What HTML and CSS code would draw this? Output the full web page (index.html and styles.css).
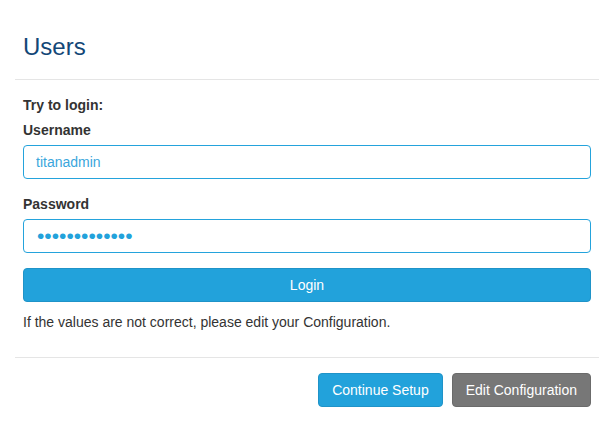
FILE: index.html
```html
<!DOCTYPE html>
<html>
<head>
<meta charset="utf-8">
<link rel="stylesheet" href="styles.css">
</head>
<body>
<div class="modal">
  <div class="modal-header">
    <h1 class="title">Users</h1>
  </div>
  <div class="modal-body">
    <div class="label">Try to login:</div>
    <div class="form-group">
      <label class="label" for="u">Username</label>
      <input class="input" id="u" type="text" value="titanadmin">
    </div>
    <div class="form-group">
      <label class="label" for="p">Password</label>
      <input class="input input-pw" id="p" type="password" value="titanadmin123">
    </div>
    <button class="btn btn-primary btn-block">Login</button>
    <p class="note">If the values are not correct, please edit your Configuration.</p>
  </div>
  <div class="modal-footer">
    <button class="btn btn-primary">Continue Setup</button>
    <button class="btn btn-default">Edit Configuration</button>
  </div>
</div>
</body>
</html>
```

FILE: styles.css
```css
html, body {
  margin: 0;
  padding: 0;
  background: #fff;
}
body {
  font-family: "Liberation Sans", Arial, sans-serif;
  font-size: 14px;
  line-height: 20px;
  color: #333;
}
.modal {
  margin-left: 15px;
  width: 584px;
}
.modal-header {
  padding: 33px 8px 19px;
  border-bottom: 1px solid #e5e5e5;
}
.title {
  margin: 0;
  font-size: 24px;
  line-height: 27px;
  font-weight: normal;
  color: #134777;
}
.modal-body {
  padding: 15px 8px;
}
.label {
  display: block;
  font-weight: bold;
  margin-bottom: 5px;
}
.form-group {
  margin-bottom: 15px;
}
.input {
  display: block;
  box-sizing: border-box;
  width: 100%;
  height: 34px;
  margin: 0;
  padding: 6px 12px;
  border: 1px solid #24a3dc;
  border-radius: 4px;
  font-family: "Liberation Sans", Arial, sans-serif;
  font-size: 14px;
  color: #3aa6dc;
  background: #fff;
  outline: none;
}
.input-pw {
  padding: 0 12px 0 13px;
  font-size: 21px;
  color: #22a2db;
}
.btn {
  box-sizing: border-box;
  height: 34px;
  margin: 0;
  padding: 6px 13px;
  border: 1px solid transparent;
  border-radius: 4px;
  font-family: "Liberation Sans", Arial, sans-serif;
  font-size: 14px;
  line-height: 20px;
  color: #fff;
  cursor: pointer;
}
.btn-primary {
  background: #22a2db;
  border-color: #1f93c8;
}
.btn-default {
  background: #777777;
  border-color: #6b6b6b;
}
.btn-block {
  display: block;
  width: 100%;
  margin-bottom: 10px;
}
.note {
  margin: 0 0 10px;
}
.modal-footer {
  display: flex;
  justify-content: flex-end;
  gap: 9px;
  padding: 15px 8px;
  border-top: 1px solid #e5e5e5;
}
```
